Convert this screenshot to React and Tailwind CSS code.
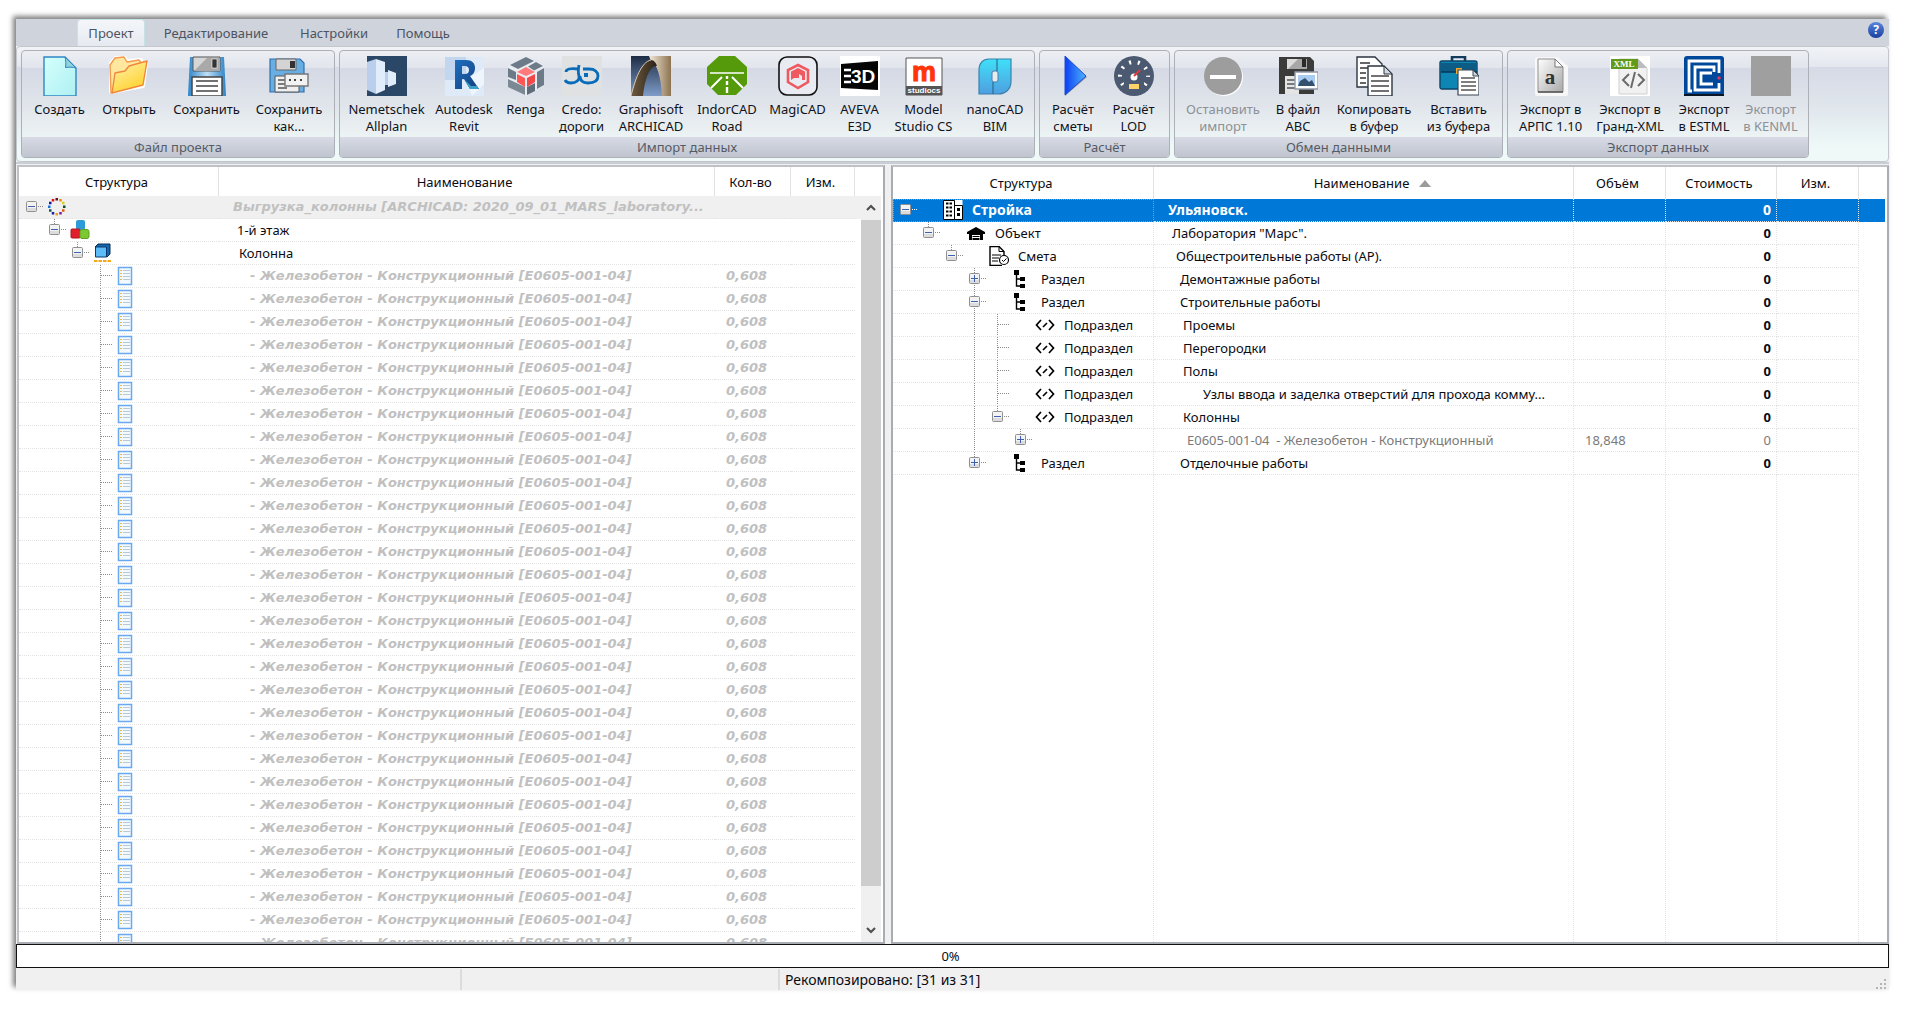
import React, { useState } from "react";
import clsx from "clsx";

/* ---------- ribbon icons (40x40) ---------- */

const Svg = ({ children }) => (
  <svg width="40" height="40" viewBox="0 0 40 40" className="block" aria-hidden="true">
    {children}
  </svg>
);

const NewIcon = () => (
  <Svg>
    <defs>
      <linearGradient id="newFill" x1="0" y1="0" x2="1" y2="1">
        <stop offset="0" stopColor="#d4fffc" />
        <stop offset="1" stopColor="#aef0f2" />
      </linearGradient>
    </defs>
    <path d="M4 1h21l11 11v28H4z" fill="url(#newFill)" stroke="#2f86c4" strokeWidth="1.4" />
    <path d="M25 1c1 4 1 7 .5 10.500 4-.5 7-.5 10.500.5z" fill="#8fd3dd" stroke="#2f86c4" />
  </Svg>
);

const OpenIcon = () => (
  <Svg>
    <defs>
      <linearGradient id="folderFill" x1="0" y1="0" x2="0.6" y2="1">
        <stop offset="0" stopColor="#fff3b0" />
        <stop offset="1" stopColor="#ffd22e" />
      </linearGradient>
    </defs>
    <path d="M2 36 1 8l6-6 8-1 3 4 14-1v6l5-2-3 22z" fill="#fff" stroke="#fff" strokeWidth="4" strokeLinejoin="round" />
    <path d="M2 37 1 9l5-7 9-1 3 5 12-2 3 4v8z" fill="#ffe7a0" stroke="#f29a4a" strokeWidth="1.4" strokeLinejoin="round" />
    <path d="M3 37 6 17l10-2 4-5 18-5-4 24z" fill="url(#folderFill)" stroke="#f0883a" strokeWidth="1.4" strokeLinejoin="round" />
  </Svg>
);

const SaveIcon = () => (
  <Svg>
    <defs>
      <linearGradient id="diskFill" x1="0" y1="0" x2="1" y2="0">
        <stop offset="0" stopColor="#2d83c8" />
        <stop offset=".5" stopColor="#bfe0f7" />
        <stop offset="1" stopColor="#2d83c8" />
      </linearGradient>
    </defs>
    <path d="M3 1h34l2 39H1z" fill="url(#diskFill)" />
    <path d="M6 1h27v14H6z" fill="#d6d6d6" stroke="#555" />
    <path d="M7 15 20 2h13v13z" fill="#a9a9a9" />
    <path d="M25 3h5v9h-5z" fill="#333" stroke="#fff" strokeWidth=".6" />
    <path d="M5 21h30v19H5z" fill="#fff" stroke="#444" strokeWidth="1.5" />
    <path d="M9 25h22M9 30h22M9 35h22" stroke="#444" strokeWidth="1.6" />
  </Svg>
);

const SaveAsIcon = () => (
  <Svg>
    <path d="M1 3h30l4 4v29H1z" fill="#69aee2" stroke="#2f6fae" strokeWidth="1.2" />
    <path d="M7 3h20v11H7z" fill="#d4d4d4" stroke="#666" />
    <path d="M21 5h5v7h-5z" fill="#333" />
    <path d="M6 20h24v16H6z" fill="#efefef" stroke="#555" />
    <path d="M9 24h9M9 28h9M9 32h9" stroke="#555" strokeWidth="1.3" />
    <path d="M16 18h23v12H16z" fill="#f2f2f2" stroke="#777" strokeWidth="1.4" />
    <path d="M20 24h2M25 24h2M31 24h2" stroke="#444" strokeWidth="2" />
  </Svg>
);

const AllplanIcon = () => (
  <Svg>
    <path d="M0 0h40v40H0z" fill="#2b4768" />
    <path d="M0 6 9 3v35l-9-4z" fill="#b9cfec" />
    <path d="m9 3 9 3v28l-9 4z" fill="#e2edfb" />
    <path d="M18 16h4v13h-4z" fill="#b9cfec" />
    <path d="m21 14 8 3v11l-8 3z" fill="#e2edfb" />
  </Svg>
);

const RevitIcon = () => (
  <Svg>
    <defs>
      <linearGradient id="revitFill" x1="0" y1="0" x2="1" y2="1">
        <stop offset="0" stopColor="#1f6fc0" />
        <stop offset="1" stopColor="#123f7c" />
      </linearGradient>
    </defs>
    <path d="M1 1h39v39H1z" fill="#dfeaf8" />
    <path d="M1 1h21v23H1z" fill="#c3d6ef" />
    <path d="m22 24 18-12v16l-12 12z" fill="#eef5fd" />
    <path
      d="M11 4h11c6 0 9 3 9 8 0 4-2 7-5 8l9 13h-9l-6-10h-2v10h-7zm7 6v8h3c2 0 4-1 4-4s-2-4-4-4z"
      fill="url(#revitFill)"
    />
    <path d="m20 23 6 10h9l-2-3h-6z" fill="#3aa0c8" />
  </Svg>
);

const RengaIcon = () => (
  <Svg>
    <path d="m20 1 18 9v20l-18 10L2 30V10z" fill="#e9edf2" />
    <path d="m20 1 8 4-16 8-8-4z" fill="#6d7b89" />
    <path d="m30 6 7 4-9 4.500-6-4z" fill="#6d7b89" />
    <path d="m2 12 8 4v8l-8-3z" fill="#6d7b89" />
    <path d="m2 23 17 8v8L2 31z" fill="#7b8995" />
    <path d="m38 12-7 4v17l7-4z" fill="#6d7b89" />
    <path d="m21 31 8-4v8l-8 4z" fill="#5f6d7b" />
    <path d="m20 11 9 5-9 4-9-4z" fill="#ff7b7b" />
    <path d="m11 18 8 4v9l-8-5z" fill="#ff5656" />
    <path d="m29 18-8 4v9l8-5z" fill="#f24848" />
  </Svg>
);

const CredoIcon = () => (
  <Svg>
    <path d="M0 0h40v40H0z" fill="#e0e1e3" />
    <g fill="none" stroke="#0a6cb8" strokeWidth="2.800">
      <path d="M4 16c0-3 4-4 12-3M17 9c-1 5-1 8 0 11 1 4-3 7-8 7-3 0-5-1-6-3" />
      <path d="M21 13h6c6 0 9 3 9 7 0 5-4 7-10 7-5 0-8-2-8-7" />
    </g>
    <path d="M22 17h4v4h-4z" fill="#0a6cb8" />
  </Svg>
);

const ArchicadIcon = () => (
  <Svg>
    <defs>
      <linearGradient id="archBg" x1="0" y1="0" x2="0" y2="1">
        <stop offset="0" stopColor="#1d2c44" />
        <stop offset="1" stopColor="#7f9cc8" />
      </linearGradient>
      <linearGradient id="archLight" x1="0" y1="0" x2="1" y2="0">
        <stop offset="0" stopColor="#f4e9da" />
        <stop offset="1" stopColor="#8c7351" />
      </linearGradient>
      <linearGradient id="archDark" x1="0" y1="0" x2="1" y2="0">
        <stop offset="0" stopColor="#6e5b40" />
        <stop offset="1" stopColor="#2a2117" />
      </linearGradient>
    </defs>
    <path d="M0 0h40v40H0z" fill="url(#archBg)" />
    <path d="M18 0h22v40h-9C30 20 26 8 20 5z" fill="url(#archLight)" />
    <path d="M0 40C4 24 10 6 20 4c3 0 5 3 6 6-7-1-12 12-14 30z" fill="url(#archDark)" />
    <path d="M0 40C4 24 10 6 20 4" fill="none" stroke="#dccbb0" />
  </Svg>
);

const IndorIcon = () => (
  <Svg>
    <path d="M12 0h16l12 11v17L29 39H11L0 28V11z" fill="#549a0a" />
    <path d="M3 17h34" stroke="#fff" strokeWidth="1.600" />
    <path d="M15 21 4 32M25 21l11 11" stroke="#fff" strokeWidth="2" />
    <path d="M20 20v3M20 25v4M20 31v6" stroke="#fff" strokeWidth="2.400" />
  </Svg>
);

const MagicadIcon = () => (
  <Svg>
    <rect x="1" y="1" width="38" height="38" rx="8" fill="#e9ebf2" stroke="#111" strokeWidth="1.600" />
    <path d="m20 9 10 5v12l-10 6-10-6V14z" fill="none" stroke="#ee5a60" strokeWidth="2.600" />
    <path d="m20 12 7 3.500V24h-3v-4l-3-2v4h-5l-3 2v-8.500z" fill="#ee5a60" />
  </Svg>
);

const AvevaIcon = () => (
  <Svg>
    <path d="M0 0h40v40H0z" fill="#fff" />
    <path d="m1 8 37-3v29L1 32z" fill="#050505" />
    <path d="M4 14h7M4 20h7M4 26h7" stroke="#fff" strokeWidth="2.400" />
    <text x="11" y="27" fontFamily="Liberation Sans, sans-serif" fontSize="19" fontWeight="700" fill="#fff">
      3D
    </text>
  </Svg>
);

const ModelIcon = () => (
  <Svg>
    <path d="M2 2h36v37H2z" fill="#fff" stroke="#555" />
    <text x="20" y="25" textAnchor="middle" fontFamily="Liberation Sans, sans-serif" fontSize="27" fontWeight="700" fill="#ff3408" stroke="#ff3408">
      m
    </text>
    <path d="M2 30h36v9H2z" fill="#555" />
    <text x="20" y="37" textAnchor="middle" fontFamily="Liberation Sans, sans-serif" fontSize="8" fontWeight="700" fill="#fff">
      studiocs
    </text>
  </Svg>
);

const NanocadIcon = () => (
  <Svg>
    <defs>
      <linearGradient id="nanoFill" x1="0" y1="0" x2="0" y2="1">
        <stop offset="0" stopColor="#3fe0f8" />
        <stop offset="1" stopColor="#4f9ee0" />
      </linearGradient>
    </defs>
    <path d="M14 3h22v22c0 8-5 13-13 13H4V14C4 7 8 3 14 3z" fill="url(#nanoFill)" stroke="#3a82ab" strokeWidth="1.200" />
    <path d="M22 3v12M18 26v12" stroke="#2c6d93" strokeWidth="1.200" />
    <rect x="17" y="15" width="6" height="11" rx="2" fill="#e7ebf2" stroke="#4c7fa5" />
  </Svg>
);

const PlayIcon = () => (
  <Svg>
    <defs>
      <linearGradient id="playFill" x1="0" y1="0" x2="1" y2="0">
        <stop offset="0" stopColor="#0c3ef2" />
        <stop offset="1" stopColor="#4fb4ff" />
      </linearGradient>
    </defs>
    <path d="m12 1 22 20-22 19z" fill="#8b94a6" />
    <path d="m12 0 21 20-21 19z" fill="url(#playFill)" stroke="#1c4ed0" />
  </Svg>
);

const GaugeIcon = () => (
  <Svg>
    <circle cx="20" cy="20" r="20" fill="#4b5a70" />
    <circle cx="20" cy="20" r="14" fill="none" stroke="#fff" strokeWidth="4" strokeDasharray="2 6.800" strokeDashoffset="1" />
    <path d="M10 27h20v9H10z" fill="#4b5a70" />
    <circle cx="20" cy="21" r="3.500" fill="#fff" />
    <path d="m20 20 6-6" stroke="#e23a3a" strokeWidth="2" />
    <path d="M15 28h10v5H15z" fill="#ffd16a" />
  </Svg>
);

const StopIcon = () => (
  <Svg>
    <circle cx="21" cy="21" r="19" fill="#fff" />
    <circle cx="20" cy="20" r="19" fill="#9d9d9d" />
    <path d="M7 19h26v4H7z" fill="#fff" />
  </Svg>
);

const ToFileIcon = () => (
  <Svg>
    <path d="M1 1h31l4 4v33H1z" fill="#3b3b39" />
    <path d="M9 3h20v10H9z" fill="#dcdcdc" />
    <path d="M10 13 20 3h9v10z" fill="#a7a7a7" />
    <path d="M24 3h4v8h-4z" fill="#2a2a2a" />
    <path d="M7 20h14v18H7z" fill="#e4e4e4" />
    <path d="M9 24h8M9 28h8M9 32h8" stroke="#555" strokeWidth="1.300" />
    <path d="M17 16h23v17H17z" fill="#fff" stroke="#8f9aa8" strokeWidth="1.400" />
    <path d="M20 19h17v11H20z" fill="#a9cdf2" />
    <path d="m20 30 2-5 5-3 4 4 3-2 3 6z" fill="#33506f" />
  </Svg>
);

const CopyIcon = () => (
  <Svg>
    <path d="M3 1h18l7 7v23H3z" fill="#fff" stroke="#2c3540" strokeWidth="1.400" />
    <path d="M6 7h10M6 12h8M6 17h6M6 22h6M6 27h6" stroke="#333" strokeWidth="1.600" />
    <path d="M14 10h16l8 8v22H14z" fill="#fff" stroke="#2c3540" strokeWidth="1.400" />
    <path d="M30 10v8h8z" fill="#cfd6de" stroke="#2c3540" />
    <path d="M17 20h18M17 25h18M17 30h18M17 35h18" stroke="#444" strokeWidth="1.600" />
  </Svg>
);

const PasteIcon = () => (
  <Svg>
    <path d="M13 5V1h13v4" fill="none" stroke="#123b5e" strokeWidth="2.600" />
    <rect x="1" y="5" width="37" height="28" rx="2" fill="#0d86b4" stroke="#0b4468" strokeWidth="1.400" />
    <path d="M1 7h37v9H1z" fill="#0d5c86" />
    <path d="M2 16h36" stroke="#0a3656" strokeWidth="1.400" />
    <path d="M17 12h6v6h-6z" fill="#f3a92b" />
    <path d="M19 14h15l6 6v19H19z" fill="#fff" stroke="#3a4652" strokeWidth="1.200" />
    <path d="M34 14v6h6z" fill="#cfd6de" stroke="#3a4652" />
    <path d="M22 22h14M22 26h15M22 30h15M22 34h15" stroke="#555" strokeWidth="1.400" />
  </Svg>
);

const ArpsIcon = () => (
  <Svg>
    <defs>
      <linearGradient id="arpsFill" x1="0" y1="0" x2="1" y2="1">
        <stop offset="0" stopColor="#fff" />
        <stop offset="1" stopColor="#a8a8a8" />
      </linearGradient>
    </defs>
    <path d="M6 3h20l9 8v27H6z" fill="#f7f7f7" stroke="#f7f7f7" strokeWidth="4" strokeLinejoin="round" />
    <path d="M7 3h17l8 8v25H7z" fill="url(#arpsFill)" stroke="#8f8f8f" />
    <path d="M7 36h25" stroke="#555" strokeWidth="1.600" />
    <path d="M24 3v8h8z" fill="#fff" stroke="#777" />
    <text x="19" y="28" textAnchor="middle" fontFamily="Liberation Serif, serif" fontSize="21" fontWeight="700" fill="#333">
      a
    </text>
  </Svg>
);

const XmlIcon = () => (
  <Svg>
    <path d="M0 0h40v40H0z" fill="#fff" />
    <path d="M9 3h19l9 9v26H9z" fill="#f1f1f1" stroke="#cfcfcf" />
    <path d="M28 3v9h9z" fill="#bdbdbd" />
    <path d="M1 3h27v10H1z" fill="#5f9a1a" />
    <text x="14" y="11" textAnchor="middle" fontFamily="Liberation Serif, serif" fontSize="9" fontWeight="700" fill="#fff">
      XML
    </text>
    <path d="m19 18-6 6 6 6M28 18l6 6-6 6M25 16l-4 16" fill="none" stroke="#6b6b6b" strokeWidth="2" />
  </Svg>
);

const EstmlIcon = () => (
  <Svg>
    <rect width="40" height="40" rx="3" fill="#00489a" />
    <path d="M0 38h40v2H0z" fill="#0c1524" />
    <g fill="none" stroke="#fff" strokeWidth="2.800">
      <path d="M35 17V5H5v30h3" />
      <path d="M30 16v-5H11v23h24v-7" />
      <path d="M28 17H17v11h12" />
    </g>
    <circle cx="35" cy="22" r="1.800" fill="#d8365a" />
  </Svg>
);

const KenmlIcon = () => (
  <Svg>
    <path d="M0 0h40v40H0z" fill="#9f9f9f" />
  </Svg>
);

/* ---------- ribbon data ---------- */

const tabs = [
  { name: "Проект", width: "w-[68px]" },
  { name: "Редактирование", width: "w-[134px]" },
  { name: "Настройки", width: "w-[94px]" },
  { name: "Помощь", width: "w-[76px]" },
];

const groups = [
  {
    title: "Файл проекта",
    items: [
      { label: ["Создать"], icon: NewIcon, width: "w-[67px]" },
      { label: ["Открыть"], icon: OpenIcon, width: "w-[72px]" },
      { label: ["Сохранить"], icon: SaveIcon, width: "w-[83px]" },
      { label: ["Сохранить", "как..."], icon: SaveAsIcon, width: "w-[82px]" },
    ],
  },
  {
    title: "Импорт данных",
    items: [
      { label: ["Nemetschek", "Allplan"], icon: AllplanIcon, width: "w-[85px]" },
      { label: ["Autodesk", "Revit"], icon: RevitIcon, width: "w-[70px]" },
      { label: ["Renga"], icon: RengaIcon, width: "w-[53px]" },
      { label: ["Credo:", "дороги"], icon: CredoIcon, width: "w-[59px]" },
      { label: ["Graphisoft", "ARCHICAD"], icon: ArchicadIcon, width: "w-[80px]" },
      { label: ["IndorCAD", "Road"], icon: IndorIcon, width: "w-[72px]" },
      { label: ["MagiCAD"], icon: MagicadIcon, width: "w-[69px]" },
      { label: ["AVEVA", "E3D"], icon: AvevaIcon, width: "w-[55px]" },
      { label: ["Model", "Studio CS"], icon: ModelIcon, width: "w-[73px]" },
      { label: ["nanoCAD", "BIM"], icon: NanocadIcon, width: "w-[70px]" },
    ],
  },
  {
    title: "Расчёт",
    items: [
      { label: ["Расчёт", "сметы"], icon: PlayIcon, width: "w-[58px]" },
      { label: ["Расчёт", "LOD"], icon: GaugeIcon, width: "w-[63px]" },
    ],
  },
  {
    title: "Обмен данными",
    items: [
      { label: ["Остановить", "импорт"], icon: StopIcon, width: "w-[88px]", disabled: true },
      { label: ["В файл", "ABC"], icon: ToFileIcon, width: "w-[62px]" },
      { label: ["Копировать", "в буфер"], icon: CopyIcon, width: "w-[90px]" },
      { label: ["Вставить", "из буфера"], icon: PasteIcon, width: "w-[79px]" },
    ],
  },
  {
    title: "Экспорт данных",
    items: [
      { label: ["Экспорт в", "АРПС 1.10"], icon: ArpsIcon, width: "w-[77px]" },
      { label: ["Экспорт в", "Гранд-XML"], icon: XmlIcon, width: "w-[82px]" },
      { label: ["Экспорт", "в ESTML"], icon: EstmlIcon, width: "w-[66px]" },
      { label: ["Экспорт", "в KENML"], icon: KenmlIcon, width: "w-[67px]", disabled: true },
    ],
  },
];

/* ---------- tree pieces ---------- */

// guides are 23x23 cells: "" empty, "v" line through, "t" branch
const Guide = ({ type }) => (
  <svg width="23" height="23" viewBox="0 0 23 23" className="block shrink-0" aria-hidden="true">
    {type && <path d="M11.500 0v23" stroke="#8c8c8c" strokeDasharray="1 1" />}
    {type === "t" && <path d="M12 10.500h12" stroke="#8c8c8c" strokeDasharray="1 1" />}
  </svg>
);

const Expander = ({ open, up, down, light }) => (
  <button type="button" aria-label={open ? "Свернуть" : "Развернуть"} className="block shrink-0">
    <svg width="23" height="23" viewBox="0 0 23 23" className="block">
      {up && <path d="M11.500 0v5" stroke="#8c8c8c" strokeDasharray="1 1" />}
      {down && <path d="M11.500 17v6" stroke="#8c8c8c" strokeDasharray="1 1" />}
      <path d="M18 10.500h5" stroke={light ? "#fff" : "#8c8c8c"} strokeDasharray="1 1" />
      <rect x="6.500" y="5.500" width="10" height="10" rx="1" fill="#f3f3f3" stroke="#909090" />
      <path d="M7 12h9v3H7z" fill="#dcdcdc" />
      <path d={open ? "M8 10.500h7" : "M8 10.500h7M11.500 7v7"} stroke="#3f5fb0" strokeWidth="1" />
    </svg>
  </button>
);

const Ico = ({ children }) => (
  <svg width="20" height="20" viewBox="0 0 20 20" className="block shrink-0" aria-hidden="true">
    {children}
  </svg>
);

const dotColors = [
  "#6a0f1e", "#f08a10", "#d8d020", "#0b4d2a", "#e05a10", "#7a1fa8",
  "#f0a020", "#1a1a9c", "#0f5a50", "#1a6fd8", "#1414a0", "#e01414",
];

const treeIcons = {
  model: (
    <Ico>
      {dotColors.map((c, i) => {
        const a = (i * Math.PI) / 6;
        return <rect key={i} x={8.5 + 7.5 * Math.sin(a)} y={8.5 - 7.5 * Math.cos(a)} width="2.500" height="2.500" fill={c} />;
      })}
    </Ico>
  ),
  floor: (
    <Ico>
      <rect x="6" y="0" width="9" height="10" rx="2" fill="#2e9bd8" />
      <rect x="1" y="9" width="9" height="9" rx="1" fill="#e01f2c" stroke="#b51420" />
      <rect x="10" y="9.500" width="9" height="9" rx="2" fill="#7cc832" stroke="#5da31c" />
    </Ico>
  ),
  column: (
    <Ico>
      <path d="m2 4 3-3h12v10l-3 3z" fill="#1565b0" stroke="#0b2d52" />
      <path d="M2.500 4h11v10h-11z" fill="#5cbcf7" stroke="#0b3a68" />
      <path d="M1 18h18" stroke="#f5a91a" strokeWidth="2" strokeDasharray="3.500 1" />
    </Ico>
  ),
  sheet: (
    <Ico>
      <path d="M2.500 1.500h13v17h-13z" fill="#f3fafe" stroke="#6aa8f2" strokeWidth="1.500" />
      <path d="M4 4.500h2M4 7.500h2M4 10.500h2M4 13.500h2" stroke="#f3b743" />
      <path d="M7 4.500h7M7 7.500h7M7 10.500h7M7 13.500h7" stroke="#b9c8d4" />
    </Ico>
  ),
  site: (
    <Ico>
      <path d="M11.500 0h8v6h-8z" fill="#fff" />
      <path d="M.5.5h11v19H.5z" fill="#fff" stroke="#000" />
      <path d="M11.500 5.500h8v14h-8z" fill="#fff" stroke="#000" />
      <path d="M3 3.500h6M3 7.500h6M3 11.500h6M3 15.500h6" stroke="#000" strokeWidth="2" strokeDasharray="2.500 1" />
      <path d="M14 8h3v3h-3zM14 13h3v3h-3z" fill="#000" />
    </Ico>
  ),
  house: (
    <Ico>
      <path d="m10 4 9 5v2h-2v6h-3v-5H6v5H3v-6H1V9z" fill="#000" />
      <path d="M6.500 13h7v1h-7zM6.500 15h7v2h-7z" fill="#000" />
    </Ico>
  ),
  estimate: (
    <Ico>
      <path d="M13 19.500H1V.5h9l5 5v4" fill="#fff" stroke="#000" strokeWidth="1.400" />
      <path d="M10 .5v5h5" fill="none" stroke="#000" />
      <path d="M3 9h9M3 12h7M3 15h6" stroke="#000" strokeWidth="1.200" />
      <circle cx="15" cy="14" r="4.500" fill="#fff" stroke="#000" strokeWidth="1.200" />
      <path d="m13 14 1.500 1.500 3-3" fill="none" stroke="#000" />
    </Ico>
  ),
  section: (
    <Ico>
      <path d="M2 1h5v5H2zM8 8h5v4H8zM8 15h5v4H8z" fill="#000" />
      <path d="M4.500 5v12H9M4.500 10H9" fill="none" stroke="#000" strokeWidth="1.400" />
    </Ico>
  ),
  sub: (
    <Ico>
      <path d="M6 5 1.500 10 6 15M14 5l4.500 5-4.500 5M12 8l-4 4" fill="none" stroke="#000" strokeWidth="1.700" />
    </Ico>
  ),
};

/* ---------- data ---------- */

const modelRows = [
  { icon: "model", guides: [], open: true, name: "Выгрузка_колонны [ARCHICAD: 2020_09_01_MARS_laboratory...", pad: "pl-[14px]", muted: true, shaded: true },
  { icon: "floor", guides: [""], open: true, up: true, name: "1-й этаж", pad: "pl-[18px]" },
  { icon: "column", guides: ["", ""], open: true, up: true, name: "Колонна", pad: "pl-5" },
  ...Array.from({ length: 30 }, () => ({
    icon: "sheet",
    guides: ["", "", "", "t"],
    name: "- Железобетон - Конструкционный [E0605-001-04]",
    pad: "pl-[31px]",
    qty: "0,608",
    muted: true,
  })),
];

const estimateRows = [
  { icon: "site", guides: [], open: true, type: "Стройка", name: "Ульяновск.", pad: "pl-[14px]", selected: true },
  { icon: "house", guides: [""], open: true, up: true, type: "Объект", name: "Лаборатория \"Марс\".", pad: "pl-[18px]" },
  { icon: "estimate", guides: ["", ""], open: true, up: true, type: "Смета", name: "Общестроительные работы (АР).", pad: "pl-[22px]" },
  { icon: "section", guides: ["", "", ""], open: false, up: true, down: true, type: "Раздел", name: "Демонтажные работы", pad: "pl-[26px]" },
  { icon: "section", guides: ["", "", ""], open: true, up: true, down: true, type: "Раздел", name: "Строительные работы", pad: "pl-[26px]" },
  { icon: "sub", guides: ["", "", "", "v", "t"], type: "Подраздел", name: "Проемы", pad: "pl-[29px]" },
  { icon: "sub", guides: ["", "", "", "v", "t"], type: "Подраздел", name: "Перегородки", pad: "pl-[29px]" },
  { icon: "sub", guides: ["", "", "", "v", "t"], type: "Подраздел", name: "Полы", pad: "pl-[29px]" },
  { icon: "sub", guides: ["", "", "", "v", "t"], type: "Подраздел", name: "Узлы ввода и заделка отверстий для прохода комму...", pad: "pl-[49px]" },
  { icon: "sub", guides: ["", "", "", "v"], open: true, up: true, type: "Подраздел", name: "Колонны", pad: "pl-[29px]" },
  { guides: ["", "", "", "v", ""], open: false, up: true, name: "E0605-001-04  - Железобетон - Конструкционный", pad: "pl-[33px]", volume: "18,848", gray: true },
  { icon: "section", guides: ["", "", ""], open: false, up: true, type: "Раздел", name: "Отделочные работы", pad: "pl-[26px]" },
];

/* ---------- layout ---------- */

const Ribbon = () => {
  const [active, setActive] = useState("Проект");

  return (
    <header>
      <div className="flex h-[27px] items-end bg-[#cfd3dc] pl-[61px] pr-[5px]">
        <nav className="flex flex-1 gap-1">
          {tabs.map((t) => (
            <button
              key={t.name}
              type="button"
              onClick={() => setActive(t.name)}
              className={clsx(
                "h-[27px] text-center text-[#4d5461]",
                t.width,
                t.name === active && "rounded-t border border-b-0 border-[#c5e2e6] bg-linear-to-b from-[#f4f6f9] to-[#e6eaf0]"
              )}
            >
              {t.name}
            </button>
          ))}
        </nav>
        <button
          type="button"
          aria-label="Справка"
          className="mb-2 flex size-4 items-center justify-center rounded-full bg-linear-to-b from-[#5a86e0] to-[#1c3f9e] text-xs leading-4 font-bold text-white"
        >
          ?
        </button>
      </div>

      <div className="flex h-[116px] gap-1 rounded border border-[#c3c6cc] bg-[linear-gradient(#f1f3f7_0px,#e4e8ee_20px,#d6dae6_20px,#e0e6ec_60px,#eff9f8_100px)] px-1 pt-[3px]">
        {groups.map((g) => (
          <section
            key={g.title}
            className="flex h-[108px] flex-col overflow-hidden rounded border border-[#adb0b7] bg-[linear-gradient(#eceef3_0px,#e2e5ec_17px,#d5d9e5_17px,#dfe3ea_50px,#edf4f4_87px)]"
          >
            <div className="flex flex-1 px-1 pt-[5px]">
              {g.items.map((b) => {
                const Icon = b.icon;
                return (
                  <button
                    key={b.label.join(" ")}
                    type="button"
                    disabled={b.disabled}
                    className={clsx(
                      "flex flex-col items-center gap-[5px] leading-[17px] whitespace-nowrap",
                      b.width,
                      b.disabled ? "text-[#8d9096]" : "text-[#10131c]"
                    )}
                  >
                    <Icon />
                    <span>
                      {b.label.map((line) => (
                        <span key={line} className="block">{line}</span>
                      ))}
                    </span>
                  </button>
                );
              })}
            </div>
            <h2 className="h-5 bg-linear-to-b from-[#d8dbe6] to-[#bfc4cf] text-center leading-5 text-[#555b66]">
              {g.title}
            </h2>
          </section>
        ))}
      </div>
    </header>
  );
};

const TreeCell = ({ row, wide }) => (
  <div className="flex h-[22px] items-center overflow-hidden pl-px">
    {row.guides.map((g, i) => (
      <Guide key={i} type={g} />
    ))}
    {row.open !== undefined && <Expander open={row.open} up={row.up} down={row.down} light={row.selected} />}
    {row.icon && (
      <div className={clsx("shrink-0", wide ? "pl-[26px]" : "pl-1")}>{treeIcons[row.icon]}</div>
    )}
    {row.type && <span className="pl-[9px]">{row.type}</span>}
  </div>
);

const HeadCell = ({ children }) => (
  <th className="border-r border-[#e2e2e2] p-0 pr-1 text-center font-normal">{children}</th>
);

const ModelPanel = () => (
  <section className="flex w-[868px] shrink-0 overflow-hidden border-2 border-[#a9acb2] border-t-[#bfc1c6] border-l-[#bfc1c6] bg-white pr-[2px]">
    <div className="min-w-0 flex-1 overflow-hidden">
      <table className="w-full table-fixed border-separate border-spacing-0">
        <colgroup>
          <col className="w-[200px]" />
          <col />
          <col className="w-[76px]" />
          <col className="w-[64px]" />
          <col className="w-[6px]" />
        </colgroup>
        <thead>
          <tr className="h-[29px]">
            <HeadCell>Структура</HeadCell>
            <HeadCell>Наименование</HeadCell>
            <HeadCell>Кол-во</HeadCell>
            <HeadCell>Изм.</HeadCell>
            <th className="p-0" />
          </tr>
        </thead>
        <tbody>
          {modelRows.map((row, i) => (
            <tr
              key={i}
              className={clsx(
                "h-[23px] *:border-dotted *:border-[#e4e4e4] *:not-last:border-b *:p-0",
                row.shaded && "bg-[#f0f0f0]",
                row.muted && "font-['DejaVu_Sans',sans-serif] font-bold text-[#c0c0c0] italic"
              )}
            >
              <td><TreeCell row={row} /></td>
              <td className="overflow-hidden whitespace-nowrap">
                <div className={row.pad}>{row.name}</div>
              </td>
              <td>
                <div className="pl-[11px]">{row.qty}</div>
              </td>
              <td />
              <td />
            </tr>
          ))}
        </tbody>
      </table>
    </div>
    <div className="mt-[29px] flex w-5 flex-col items-center bg-[#f0f0f0]">
      <button type="button" aria-label="Вверх" className="flex h-6 w-full items-center justify-center">
        <svg width="10" height="8" viewBox="0 0 10 8"><path d="m1 6 4-4 4 4" fill="none" stroke="#505050" strokeWidth="2.200" /></svg>
      </button>
      <div className="w-full flex-1 bg-[#cdcdcd]" />
      <div className="h-8 w-full" />
      <button type="button" aria-label="Вниз" className="flex h-6 w-full items-center justify-center">
        <svg width="10" height="8" viewBox="0 0 10 8"><path d="m1 2 4 4 4-4" fill="none" stroke="#505050" strokeWidth="2.200" /></svg>
      </button>
    </div>
  </section>
);

const EstimatePanel = () => (
  <section className="min-w-0 flex-1 overflow-hidden border-2 border-[#a9acb2] border-t-[#bfc1c6] bg-white pr-[2px]">
    <table className="h-full w-full table-fixed border-separate border-spacing-0">
      <colgroup>
        <col className="w-[261px]" />
        <col />
        <col className="w-[92px]" />
        <col className="w-[111px]" />
        <col className="w-[82px]" />
        <col className="w-[26px]" />
      </colgroup>
      <thead>
        <tr className="h-8">
          <HeadCell>Структура</HeadCell>
          <HeadCell>
            <span className="flex items-center justify-center gap-[10px] pl-[22px]">
              Наименование
              <svg width="12" height="8" viewBox="0 0 12 8"><path d="m0 8 6-7 6 7z" fill="#9b9b9b" /></svg>
            </span>
          </HeadCell>
          <HeadCell>Объём</HeadCell>
          <HeadCell>Стоимость</HeadCell>
          <HeadCell>Изм.</HeadCell>
          <th className="p-0" />
        </tr>
      </thead>
      <tbody>
        {estimateRows.map((row, i) => (
          <tr
            key={i}
            className={clsx(
              "h-[23px] *:border-dotted *:border-[#e4e4e4] *:not-last:border-r *:not-last:border-b *:p-0",
              row.selected && "bg-[#0078d7] text-sm font-bold text-white",
              row.gray && "text-[#7a7a7a]"
            )}
          >
            <td className={clsx(row.selected && "outline-1 -outline-offset-1 outline-dotted outline-[#e08a3c]")}>
              <TreeCell row={row} wide />
            </td>
            <td className="overflow-hidden whitespace-pre">
              <div className={row.pad}>{row.name}</div>
            </td>
            <td>
              <div className="pl-[11px]">{row.volume}</div>
            </td>
            <td className={clsx("text-right", !row.gray && "font-bold")}>
              <div className="pr-[5px]">0</div>
            </td>
            <td />
            <td />
          </tr>
        ))}
        <tr className="*:border-dotted *:border-[#e4e4e4] *:not-last:border-r *:p-0">
          <td />
          <td />
          <td />
          <td />
          <td />
          <td />
        </tr>
      </tbody>
    </table>
  </section>
);

const App = () => {
  return (
    <div className="h-screen bg-white pt-[19px] pr-6 pb-[21px] pl-4 font-['Noto_Sans',sans-serif] text-[13px] leading-[18px] text-[#0b0b12]">
      <div className="flex h-full flex-col bg-[#f0f0f0] shadow-[-3px_-3px_5px_rgba(0,0,0,0.5)]">
        <Ribbon />

        <main className="flex min-h-0 flex-1 gap-[6px] border-t-2 border-[#c9ced6] bg-[#f0f0f0] pt-px pl-px">
          <ModelPanel />
          <EstimatePanel />
        </main>

        <div
          role="progressbar"
          aria-valuenow={0}
          className="h-6 border border-[#111] bg-white pr-1 text-center leading-[22px]"
        >
          0%
        </div>

        <footer className="flex h-[22px] items-stretch bg-[#f0f0f0] pt-px text-sm">
          <div className="w-[446px] border-r-2 border-[#dcdcdc]" />
          <div className="w-[318px] border-r-2 border-[#dcdcdc]" />
          <div className="flex-1 pl-[5px] leading-[22px]">Рекомпозировано: [31 из 31]</div>
          <svg width="12" height="12" viewBox="0 0 12 12" className="mr-[2px] self-end" aria-hidden="true">
            <path d="M9 1h2v2H9zM5 5h2v2H5zM9 5h2v2H9zM1 9h2v2H1zM5 9h2v2H5zM9 9h2v2H9z" fill="#b4b4b4" />
          </svg>
        </footer>
      </div>
    </div>
  );
};

export default App;
